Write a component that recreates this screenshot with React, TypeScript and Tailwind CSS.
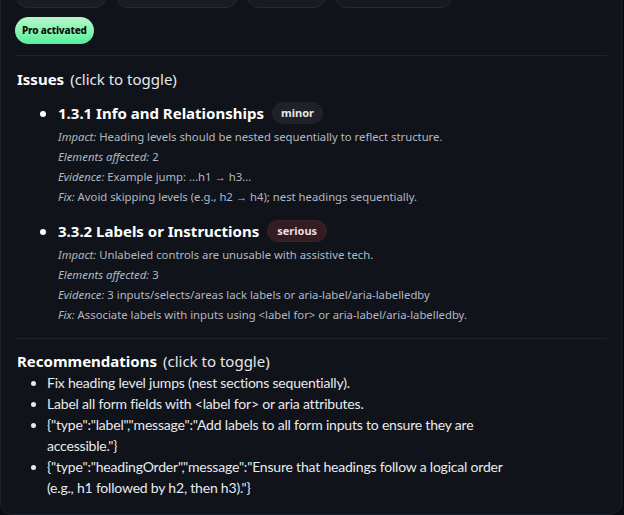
import React from "react";

const font = { fontFamily: '"Noto Sans", "Segoe UI", sans-serif' };
const recFont = { fontFamily: 'Lato, "Noto Sans", sans-serif' };

function Detail({ label, children }: { label: string; children: React.ReactNode }) {
  return (
    <div className="text-[11.3px] leading-[20px] text-[#b3b8c2]">
      <i>{label}</i> {children}
    </div>
  );
}

export default function App() {
  return (
    <div className="flex h-[515px] flex-col overflow-hidden bg-[#0b0d12]" style={font}>
      <div className="-mt-[30px] w-[622px] flex-1 rounded-xl border border-[#1c2029] bg-[#10131a] px-[14px] text-white">
        <div className="flex gap-[9px] pl-px">
          <div className="h-[37px] w-[91px] rounded-xl border border-[#262a33] bg-[#1a1c21]" />
          <div className="h-[37px] w-[122px] rounded-xl border border-[#262a33] bg-[#191c24]" />
          <div className="h-[37px] w-[79px] rounded-xl border border-[#262a33] bg-[#1a1b1f]" />
          <div className="h-[37px] w-[117px] rounded-xl border border-[#262a33] bg-[#161920]" />
        </div>
        <div className="mt-[9px] flex">
          <span className="flex h-[27px] items-center rounded-full bg-gradient-to-b from-[#b4f7c8] to-[#52ef9c] px-[7px] text-[10px] font-extrabold tracking-[-0.2px] text-[#0b0f0c]">
            Pro activated
          </span>
        </div>
        <div className="mt-[11px] h-px bg-[#1f232c]" />
        <div className="mt-[12px] pl-[2px] text-[15px] leading-[22px]">
          <span className="font-bold">Issues</span>
          <span className="ml-[6px] text-[#e5e7eb]">(click to toggle)</span>
        </div>
        <ul className="mt-[11px] list-disc pl-[43px] marker:text-white">
          <li>
            <div className="flex items-center gap-[8px]">
              <span className="text-[15px] font-bold leading-[24px]">1.3.1 Info and Relationships</span>
              <span className="rounded-full bg-[#1e2129] px-[9px] py-[3px] text-[11px] font-bold leading-[16px] text-[#e7e8ea]">minor</span>
            </div>
            <div className="mt-[2px]">
              <Detail label="Impact:">Heading levels should be nested sequentially to reflect structure.</Detail>
              <Detail label="Elements affected:">2</Detail>
              <Detail label="Evidence:">Example jump: ...h1 → h3...</Detail>
              <Detail label="Fix:">Avoid skipping levels (e.g., h2 → h4); nest headings sequentially.</Detail>
            </div>
          </li>
          <li className="mt-[12px]">
            <div className="flex items-center gap-[8px]">
              <span className="text-[15px] font-bold leading-[24px]">3.3.2 Labels or Instructions</span>
              <span className="rounded-full border border-[#3f2229] bg-[#331c23] px-[9px] py-[2px] text-[11px] font-bold leading-[16px] text-[#ecdfe2]">serious</span>
            </div>
            <div className="mt-[2px]">
              <Detail label="Impact:">Unlabeled controls are unusable with assistive tech.</Detail>
              <Detail label="Elements affected:">3</Detail>
              <Detail label="Evidence:">3 inputs/selects/areas lack labels or aria-label/aria-labelledby</Detail>
              <Detail label="Fix:">Associate labels with inputs using &lt;label for&gt; or aria-label/aria-labelledby.</Detail>
            </div>
          </li>
        </ul>
        <div className="mt-[13px] h-px bg-[#1f232c]" />
        <div className="mt-[11px] pl-[2px] text-[15px] leading-[22px]">
          <span className="font-bold">Recommendations</span>
          <span className="ml-[6px] text-[#e5e7eb]">(click to toggle)</span>
        </div>
        <ul className="w-[505px] list-disc pl-[32px] text-[14px] leading-[21px] tracking-[-0.2px] text-[#e8eaee]" style={recFont}>
          <li>Fix heading level jumps (nest sections sequentially).</li>
          <li>Label all form fields with &lt;label for&gt; or aria attributes.</li>
          <li>{'{"type":"label","message":"Add labels to all form inputs to ensure they are accessible."}'}</li>
          <li>{'{"type":"headingOrder","message":"Ensure that headings follow a logical order (e.g., h1 followed by h2, then h3)."}'}</li>
        </ul>
      </div>
    </div>
  );
}
